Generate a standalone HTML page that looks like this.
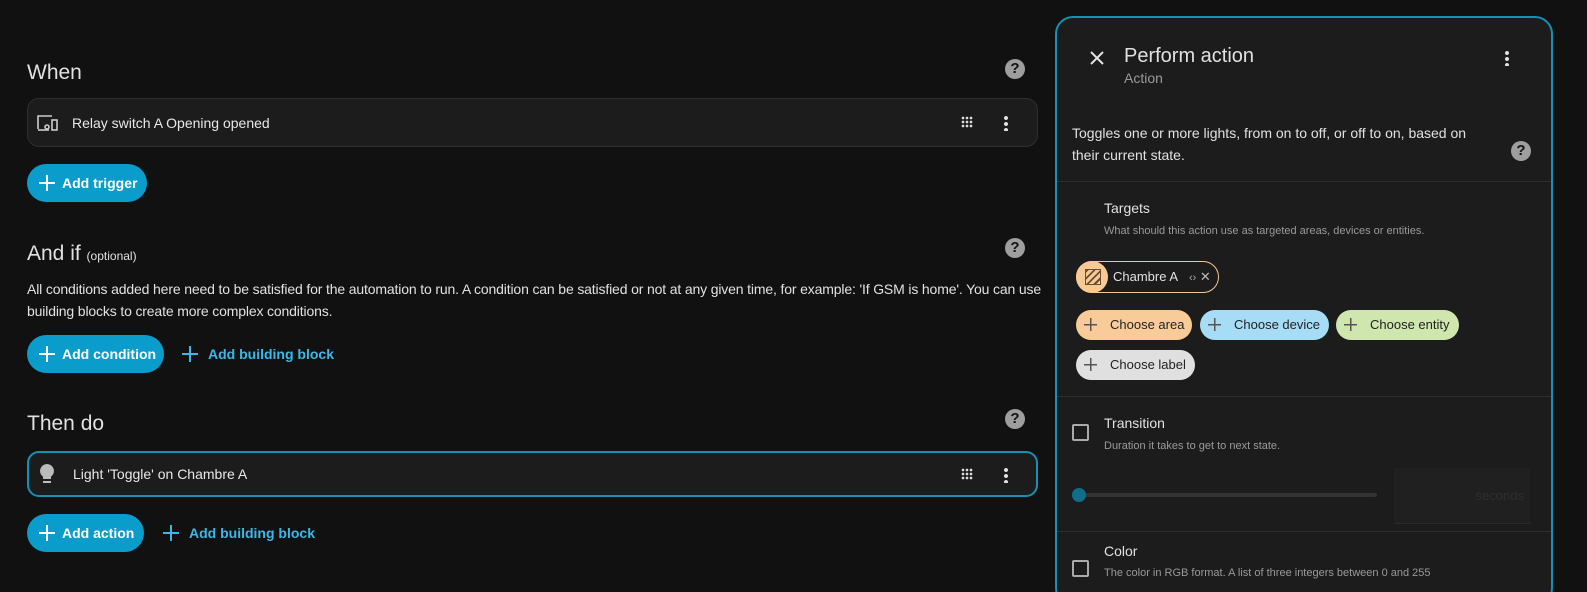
<!DOCTYPE html><html><head><style>
*{box-sizing:border-box;margin:0;padding:0}
html,body{width:1587px;height:592px;overflow:hidden}
body{background:#111111;font-family:"Liberation Sans",Roboto,sans-serif;color:#e1e1e1;position:relative}
.a{position:absolute}
h2{position:absolute;font-weight:400;font-size:21px;color:#e1e1e1}
.help{position:absolute;width:20px;height:20px;border-radius:50%;background:#9e9e9e;color:#111;font-weight:700;font-size:15px;text-align:center;line-height:20px}
.card{position:absolute;left:27px;width:1011px;background:#1c1c1c;border:1px solid #2f2f2f;border-radius:12px}
.card .t{position:absolute;left:44px;font-size:14px;color:#e8e8e8}
.btn{position:absolute;height:38px;border-radius:19px;background:#0a9cca;color:#fff;font-size:14px;font-weight:700;line-height:38px;padding-left:35px}
.btn:before,.lnk:before{content:"";position:absolute;left:12px;top:11px;width:16px;height:16px;background:linear-gradient(currentColor,currentColor) center/16px 2px no-repeat,linear-gradient(currentColor,currentColor) center/2px 16px no-repeat}
.lnk{position:absolute;color:#3bb8e8;font-size:14px;font-weight:700;height:38px;line-height:38px;padding-left:26px}
.lnk:before{left:0}
.dots{position:absolute;width:12px;height:12px;background:radial-gradient(circle,#ddd 1.2px,transparent 1.5px) 0 0/4px 4px}
.kebab{position:absolute;width:4px;height:16px;background:radial-gradient(circle,#e1e1e1 1.8px,transparent 2.2px) 0 0/4px 6px}
.p{color:#e1e1e1;font-size:14px}
.panel{position:absolute;left:1055px;top:16px;width:498px;height:590px;background:#1c1c1c;border:2px solid #1592b3;border-radius:18px}
.hr{position:absolute;left:0;right:0;height:1px;background:#2f2f2f}
.chip{position:absolute;height:30px;border-radius:15px;font-size:13px;color:#222;line-height:30px;padding-left:34px}
.chip:before{content:"";position:absolute;left:8px;top:8px;width:13px;height:13px;background:linear-gradient(#555,#555) center/13px 1.5px no-repeat,linear-gradient(#555,#555) center/1.5px 13px no-repeat}
.cb{position:absolute;width:17px;height:17px;border:2px solid #aaa;border-radius:2px}
.sub{position:absolute;font-size:11px;color:#9a9a9a}
</style></head><body>
<h2 style="left:27px;top:61px">When</h2>
<div class="help" style="left:1005px;top:59px">?</div>
<div class="card" style="top:98px;height:49px">
<svg class="a" style="left:9px;top:15px" width="22" height="18" viewBox="0 0 22 18" fill="none" stroke="#ccc" stroke-width="1.6"><path d="M1 15V2h14"/><rect x="15" y="6" width="5" height="10"/><circle cx="10" cy="13" r="2"/><path d="M1 16h11"/></svg>
<div class="t" style="top:16px">Relay switch A Opening opened</div>
<div class="dots" style="left:933px;top:17px"></div><div class="kebab" style="left:976px;top:16px"></div>
</div>
<div class="btn" style="left:27px;top:164px;width:120px">Add trigger</div>

<h2 style="left:27px;top:242px">And if <span style="font-size:12px">(optional)</span></h2>
<div class="help" style="left:1005px;top:238px">?</div>
<div class="a p" style="left:27px;top:278px;width:1020px;line-height:22px;letter-spacing:-0.15px">All conditions added here need to be satisfied for the automation to run. A condition can be satisfied or not at any given time, for example: 'If GSM is home'. You can use building blocks to create more complex conditions.</div>
<div class="btn" style="left:27px;top:335px;width:137px">Add condition</div>
<div class="lnk" style="left:182px;top:335px">Add building block</div>

<h2 style="left:27px;top:412px">Then do</h2>
<div class="help" style="left:1005px;top:409px">?</div>
<div class="card" style="top:451px;height:46px;border:2px solid #1592b3">
<svg class="a" style="left:10px;top:10px" width="16" height="22" viewBox="0 0 16 22"><path d="M8 1a7 7 0 0 0-4 12.7V16h8v-2.3A7 7 0 0 0 8 1z" fill="#bbb"/><rect x="4" y="18" width="8" height="2" fill="#bbb"/></svg>
<div class="t" style="top:13px">Light 'Toggle' on Chambre A</div>
<div class="dots" style="left:932px;top:15px"></div><div class="kebab" style="left:975px;top:14px"></div>
</div>
<div class="btn" style="left:27px;top:514px;width:117px">Add action</div>
<div class="lnk" style="left:163px;top:514px">Add building block</div>

<div class="panel">
<svg class="a" style="left:33px;top:33px" width="14" height="14" viewBox="0 0 14 14" stroke="#e1e1e1" stroke-width="2"><path d="M1 1l12 12M13 1L1 13"/></svg>
<div class="a" style="left:67px;top:27px;font-size:20px;color:#e1e1e1">Perform action</div>
<div class="a" style="left:67px;top:52px;font-size:14px;color:#9a9a9a">Action</div>
<div class="kebab" style="left:448px;top:32px"></div>
<div class="a p" style="left:15px;top:104px;width:420px;line-height:22px">Toggles one or more lights, from on to off, or off to on, based on their current state.</div>
<div class="help" style="left:454px;top:123px">?</div>
<div class="hr" style="top:163px"></div>
<div class="a p" style="left:47px;top:182px">Targets</div>
<div class="sub" style="left:47px;top:207px">What should this action use as targeted areas, devices or entities.</div>
<div class="a" style="left:19px;top:243px;width:143px;height:32px;border:1px solid #f5c98a;border-radius:16px;font-size:13px;color:#e1e1e1;line-height:30px;padding-left:36px">Chambre A <span style="color:#aaa;font-size:11px;margin-left:8px">‹›</span> <span style="color:#bbb">✕</span>
<div class="a" style="left:-1px;top:-1px;width:32px;height:32px;border-radius:16px;background:#f7c995"></div>
<div class="a" style="left:8px;top:7px;width:16px;height:16px;border:1.5px solid #6a5030;background:repeating-linear-gradient(135deg,#6a5030 0 2px,transparent 2px 5px)"></div>
</div>
<div class="chip" style="left:19px;top:292px;width:116px;background:#f9cb98">Choose area</div>
<div class="chip" style="left:143px;top:292px;width:129px;background:#a6dcf5">Choose device</div>
<div class="chip" style="left:279px;top:292px;width:123px;background:#cfe7ae">Choose entity</div>
<div class="chip" style="left:19px;top:332px;width:119px;background:#e0e0e0">Choose label</div>
<div class="hr" style="top:378px"></div>
<div class="cb" style="left:15px;top:406px"></div>
<div class="a p" style="left:47px;top:397px">Transition</div>
<div class="sub" style="left:47px;top:422px">Duration it takes to get to next state.</div>
<div class="a" style="left:20px;top:475px;width:300px;height:4px;background:#333;border-radius:2px"></div>
<div class="a" style="left:15px;top:470px;width:14px;height:14px;border-radius:50%;background:#0f6e8c"></div>
<div class="a" style="left:337px;top:450px;width:136px;height:56px;background:#202020;border-bottom:1px solid #2a2a2a;color:#2e2e2e;font-size:13px;text-align:right;padding:20px 6px 0 0">seconds</div>
<div class="hr" style="top:513px"></div>
<div class="cb" style="left:15px;top:542px"></div>
<div class="a p" style="left:47px;top:525px">Color</div>
<div class="sub" style="left:47px;top:549px">The color in RGB format. A list of three integers between 0 and 255</div>
</div>
</body></html>
